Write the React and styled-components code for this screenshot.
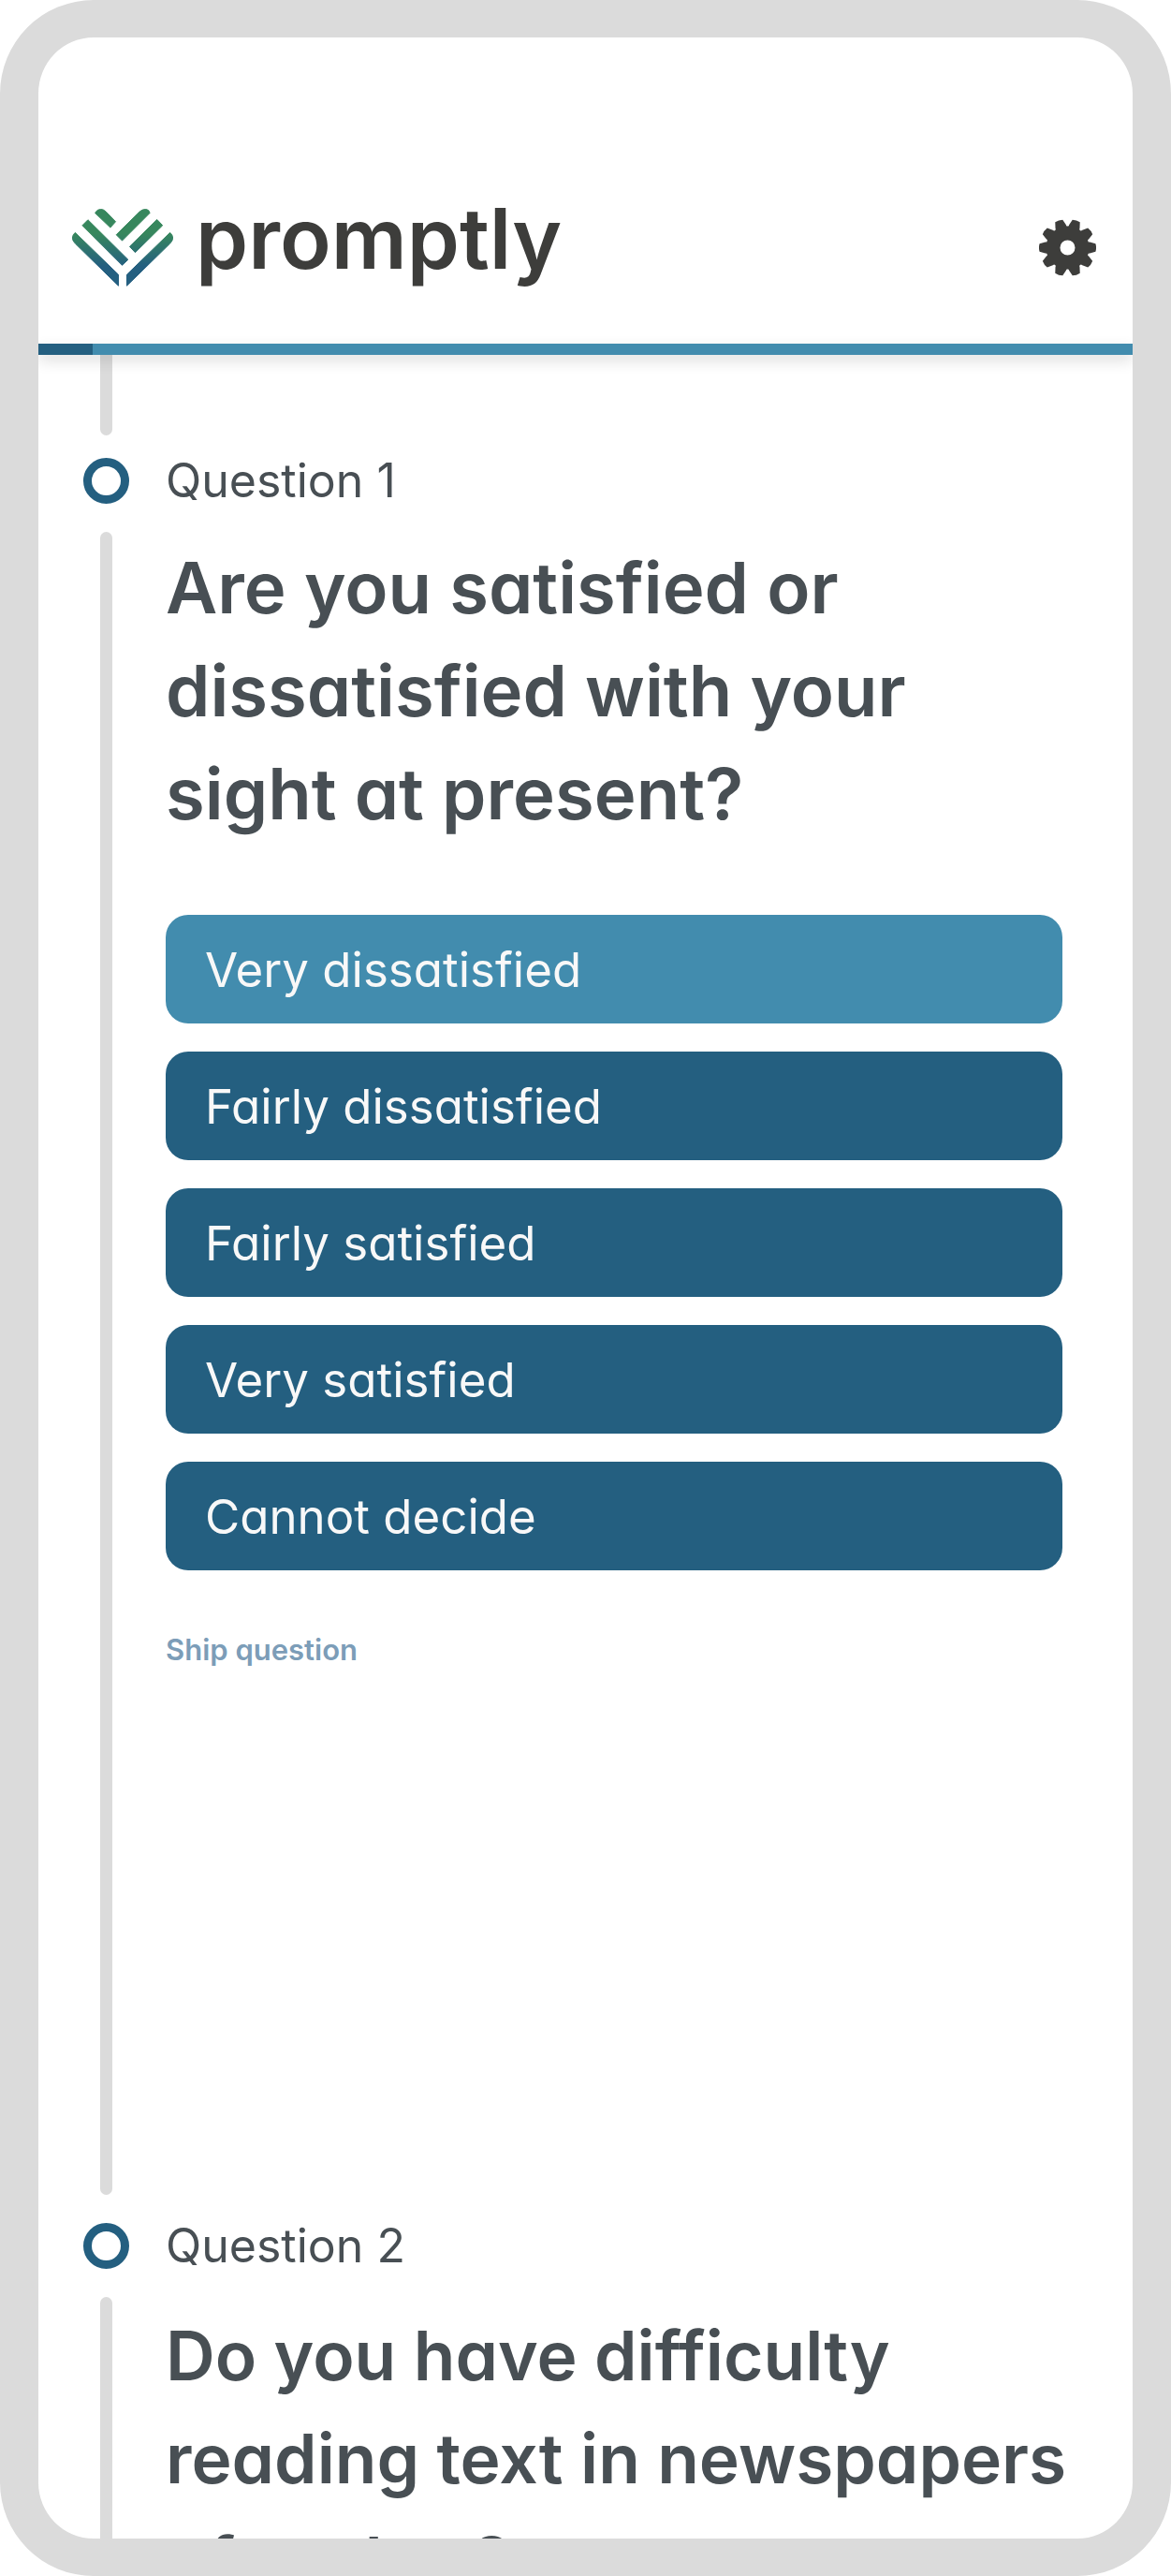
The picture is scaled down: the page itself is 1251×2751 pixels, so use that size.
import React, { useState } from 'react';
import styled, { createGlobalStyle } from 'styled-components';

const GlobalStyle = createGlobalStyle`
	* {
		box-sizing: border-box;
	}
	body {
		margin: 0;
		background: #fff;
		color: #484f54;
		font-family: Inter, 'Open Sans', sans-serif;
		font-feature-settings: 'cv11' 1;
	}
	button {
		font: inherit;
		font-feature-settings: inherit;
		border: 0;
		padding: 0;
		background: none;
		cursor: pointer;
	}
`;

const Phone = styled.div`
	display: flex;
	flex-direction: column;
	height: 100vh;
	border: solid #dbdbdb;
	border-width: 40px 41px;
	border-radius: 100px;
	background: #fff;
	overflow: hidden;
`;

const Header = styled.header`
	display: flex;
	flex-shrink: 0;
	align-items: center;
	justify-content: space-between;
	padding: 183px 39px 61px 36px;
`;

const Brand = styled.a`
	display: flex;
	align-items: flex-start;
	gap: 24px;
	color: #3d3d3b;
	text-decoration: none;
`;

const Wordmark = styled.span`
	font-size: 90px;
	font-weight: 600;
	line-height: 64px;
`;

const SettingsButton = styled.button`
	display: flex;
	color: #3d3d3b;
`;

const Progress = styled.div`
	position: relative;
	z-index: 1;
	flex-shrink: 0;
	height: 12px;
	background: #428cae;
	box-shadow: 0 6px 16px rgba(0, 0, 0, 0.14);
`;

const ProgressFill = styled.div`
	height: 100%;
	background: #245f80;
`;

const Feed = styled.main`
	flex: 1;
	min-height: 0;
	padding: 0 50px 0 48px;
	overflow-y: auto;
	scrollbar-width: none;
`;

const Rail = styled.div`
	width: 13px;
	justify-self: center;
	border-radius: 7px;
	background: #dbdbdb;
`;

const LeadIn = styled.div`
	display: grid;
	grid-template-columns: 49px;
	height: 86px;
	margin-bottom: 24px;

	${Rail} {
		border-radius: 0 0 7px 7px;
	}
`;

const Item = styled.section`
	display: grid;
	grid-template-columns: 49px 1fr;
	gap: 30px 39px;
	margin-bottom: 30px;
`;

const Marker = styled.div`
	width: 49px;
	height: 49px;
	border: 9px solid #245f80;
	border-radius: 50%;
`;

const Label = styled.p`
	margin: 0;
	font-size: 50px;
	line-height: 49px;
`;

const Body = styled.div`
	padding: ${props => (props.$active ? '4px' : '8px')} 0 562px;
`;

const Title = styled.h2`
	margin: 0;
	font-size: ${props => (props.$active ? '76px' : '73px')};
	font-weight: 600;
	line-height: 110px;
`;

const Options = styled.div`
	display: flex;
	flex-direction: column;
	gap: 30px;
	margin: 75px 25px 65px 0;
`;

const Option = styled.button`
	height: 116px;
	padding: 0 42px;
	border-radius: 24px;
	background: ${props => (props.$selected ? '#428cae' : '#245f80')};
	color: #f8f8f8;
	font-size: 51px;
	text-align: left;
`;

const SkipButton = styled.button`
	display: block;
	color: #7c9db8;
	font-size: 31px;
	font-weight: 600;
	line-height: 40px;
`;

const questions = [
	{
		id: 1,
		title: 'Are you satisfied or dissatisfied with your sight at present?',
		options: [
			'Very dissatisfied',
			'Fairly dissatisfied',
			'Fairly satisfied',
			'Very satisfied',
			'Cannot decide',
		],
	},
	{
		id: 2,
		title: 'Do you have difficulty reading text in newspapers after that?',
		options: [],
	},
];

function LogoMark() {
	return (
		<svg width="108" height="83" viewBox="50 41 325 249" aria-hidden="true">
			<defs>
				<linearGradient
					id="mark"
					gradientUnits="userSpaceOnUse"
					x1="0"
					y1="120"
					x2="0"
					y2="225">
					<stop offset="0" stopColor="#37875d" />
					<stop offset="1" stopColor="#245f80" />
				</linearGradient>
			</defs>
			<g fill="url(#mark)" stroke="url(#mark)" strokeWidth="3" strokeLinejoin="round">
				<path d="M124 54Q130 42 142 42Q151 42 158 49L190 82L173 101Z" />
				<path d="M192 124L268 49Q276 42 287 42Q298 43 300 54L211 143Z" />
				<path d="M83 94L101 76L230 204L211 222Z" />
				<path d="M235 162L323 75L341 94L253 181Z" />
				<path d="M60 117L199 252V288L60 152Q51 143 51 134Q52 123 60 117Z" />
				<path d="M365 117L226 252V288L365 152Q374 143 374 134Q373 123 365 117Z" />
			</g>
		</svg>
	);
}

const polar = (radius, degrees) => {
	const a = (degrees * Math.PI) / 180;
	return `${(radius * Math.cos(a)).toFixed(2)} ${(radius * Math.sin(a)).toFixed(2)}`;
};

// ten tapered teeth, with the hole cut out by the even-odd rule
const gearPath = Array.from(Array(10).keys(), k => {
	const a = k * 36;
	return [
		`${k ? 'L' : 'M'}${polar(23, a - 17)}`,
		`Q${polar(22.6, a - 15)} ${polar(24.5, a - 14)}`,
		`L${polar(30.2, a - 8)}`,
		`Q${polar(31.2, a)} ${polar(30.2, a + 8)}`,
		`L${polar(24.5, a + 14)}`,
		`Q${polar(22.6, a + 15)} ${polar(23, a + 17)}`,
	].join('');
}).join('');

function GearIcon() {
	return (
		<svg width="61" height="61" viewBox="-30.5 -30.5 61 61" aria-hidden="true">
			<path
				fill="currentColor"
				fillRule="evenodd"
				d={`${gearPath}ZM8 0A8 8 0 1 0 -8 0A8 8 0 1 0 8 0Z`}
			/>
		</svg>
	);
}

function Question({ id, title, options }) {
	const [selected, setSelected] = useState(0);
	const active = options.length > 0;

	return (
		<Item>
			<Marker />
			<Label>Question {id}</Label>
			<Rail />
			<Body $active={active}>
				<Title $active={active}>{title}</Title>
				{active && (
					<>
						<Options>
							{options.map((v, i) => (
								<Option
									key={v}
									type="button"
									aria-pressed={i === selected}
									$selected={i === selected}
									onClick={() => setSelected(i)}>
									{v}
								</Option>
							))}
						</Options>
						<SkipButton type="button">Ship question</SkipButton>
					</>
				)}
			</Body>
		</Item>
	);
}

function App() {
	const progress = 5;

	return (
		<>
			<GlobalStyle />
			<Phone>
				<Header>
					<Brand href="#">
						<LogoMark />
						<Wordmark>promptly</Wordmark>
					</Brand>
					<SettingsButton type="button" aria-label="Settings">
						<GearIcon />
					</SettingsButton>
				</Header>
				<Progress
					role="progressbar"
					aria-label="Progress"
					aria-valuemin={0}
					aria-valuemax={100}
					aria-valuenow={progress}>
					<ProgressFill style={{ width: `${progress}%` }} />
				</Progress>
				<Feed>
					<LeadIn>
						<Rail />
					</LeadIn>
					{questions.map(v => (
						<Question key={v.id} {...v} />
					))}
				</Feed>
			</Phone>
		</>
	);
}

export default App;
